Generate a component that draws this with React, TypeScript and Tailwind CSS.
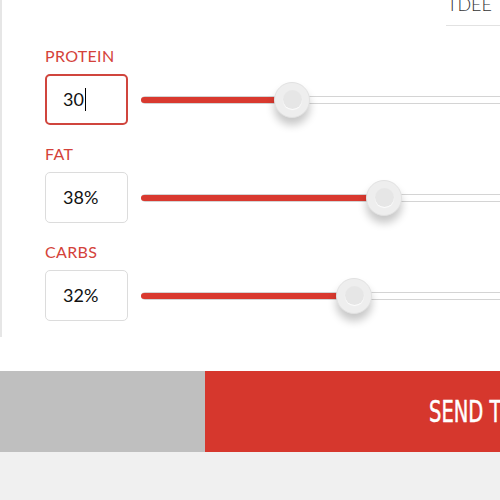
import React from "react";

const macros = [
    { label: "PROTEIN", value: "30", focused: true, thumb: 151 },
    { label: "FAT", value: "38%", focused: false, thumb: 243 },
    { label: "CARBS", value: "32%", focused: false, thumb: 213 },
];

function Slider({ thumb }: { thumb: number }) {
    return (
        <div className="relative h-[36px] flex-1 flex items-center">
            <div className="h-[8px] w-[600px] shrink-0 border border-[#d4d4d4] bg-white rounded-l-full"></div>
            <div className="absolute left-0 top-[15px] h-[6px] rounded-l-full bg-[#d9392f]" style={{ width: thumb }}></div>
            <div
                className="absolute top-0 w-[36px] h-[36px] rounded-full bg-[#eeeeee] border border-[#e2e2e2] shadow-[0_7px_9px_rgba(0,0,0,0.22)] flex items-center justify-center"
                style={{ left: thumb - 18 }}
            >
                <div className="w-[19px] h-[19px] rounded-full bg-[#e6e6e6] shadow-[0_1px_1px_rgba(255,255,255,0.9)]"></div>
            </div>
        </div>
    );
}

export default function App() {
    return (
        <div className="w-[500px] h-[500px] overflow-hidden bg-[#f0f0f0] font-['Lato','Liberation_Sans',sans-serif]">
            <div className="bg-white h-[371px]">
                <div className="h-[337px] border-l-[2px] border-[#e6e6e6]">
                    <div className="flex justify-end">
                        <div className="w-[54px] h-[36px] shrink-0 border-b border-[#e2e2e2] -mt-[10px] pl-[1px] text-[18px] leading-[28px] font-light text-[#333] whitespace-nowrap">
                            TDEE
                        </div>
                    </div>
                    <div className="pl-[43px] pt-[20px]">
                        {macros.map((m) => (
                            <div key={m.label} className="mb-[19px]">
                                <p className="text-[16px] leading-[20px] text-[#d4423a] tracking-[0.02em]">{m.label}</p>
                                <div className="flex items-center mt-[8px]">
                                    <div
                                        className={`w-[83px] h-[51px] shrink-0 rounded-[5px] flex items-center text-[18px] text-[#111] ${m.focused ? "border-2 border-[#d0453d] pl-[16px]" : "border border-[#dcdcdc] pl-[17px]"}`}
                                    >
                                        {m.value}
                                        {m.focused ? <span className="inline-block w-px h-[23px] bg-black ml-[1px]"></span> : null}
                                    </div>
                                    <div className="ml-[13px] flex-1 min-w-0">
                                        <Slider thumb={m.thumb} />
                                    </div>
                                </div>
                            </div>
                        ))}
                    </div>
                </div>
            </div>
            <div className="flex h-[81px]">
                <div className="w-[205px] shrink-0 bg-[#bfbfbf]"></div>
                <div className="w-[600px] shrink-0 bg-[#d6372d] flex items-center pl-[224px] overflow-hidden">
                    <span className="inline-block origin-left scale-x-[0.7] whitespace-nowrap text-white text-[31px] font-['DejaVu_Sans_Condensed','Liberation_Sans_Narrow',sans-serif] [-webkit-text-stroke:0.5px_white]">
                        SEND TO EMAIL
                    </span>
                </div>
            </div>
        </div>
    );
}
